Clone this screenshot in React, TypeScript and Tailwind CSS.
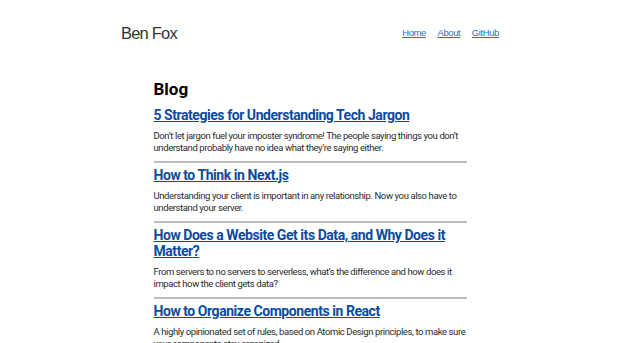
const posts = [
  {
    title: "5 Strategies for Understanding Tech Jargon",
    description:
      "Don’t let jargon fuel your imposter syndrome! The people saying things you don’t understand probably have no idea what they’re saying either.",
  },
  {
    title: "How to Think in Next.js",
    description:
      "Understanding your client is important in any relationship. Now you also have to understand your server.",
  },
  {
    title: "How Does a Website Get its Data, and Why Does it Matter?",
    description:
      "From servers to no servers to serverless, what’s the difference and how does it impact how the client gets data?",
  },
  {
    title: "How to Organize Components in React",
    description:
      "A highly opinionated set of rules, based on Atomic Design principles, to make sure your components stay organized.",
  },
];

export default function App() {
  return (
    <div className="min-h-screen bg-white font-['Roboto',sans-serif] text-[#222]">
      <header className="mx-auto flex w-[378px] items-center justify-between pt-[23px]">
        <span className="font-['Liberation_Sans',Arial,sans-serif] text-[16.5px] leading-[20px] tracking-[-0.8px] text-[#333]">
          Ben Fox
        </span>
        <nav className="flex gap-[11.5px] font-['Liberation_Sans',Arial,sans-serif] text-[9.5px] leading-[20px] tracking-[-0.4px] text-[#2a6fc0]">
          <a href="#" className="underline">Home</a>
          <a href="#" className="underline">About</a>
          <a href="#" className="underline">GitHub</a>
        </nav>
      </header>

      <main className="mx-auto mt-[36px] w-[313px]">
        <h1 className="text-[17px] font-bold leading-[20px] text-black">Blog</h1>
        <ul className="mt-[4px]">
          {posts.map((post) => (
            <li key={post.title} className="border-b-2 border-[#bdbdbd] pb-[7px] pt-[4px]">
              <a
                href="#"
                className="block text-[14px] font-bold leading-[16px] tracking-[-0.45px] text-[#0b4aa2] underline"
              >
                {post.title}
              </a>
              <p className="mt-[7px] text-[9.5px] leading-[12px] tracking-[-0.4px] text-[#2b2b2b]">
                {post.description}
              </p>
            </li>
          ))}
        </ul>
      </main>
    </div>
  );
}
